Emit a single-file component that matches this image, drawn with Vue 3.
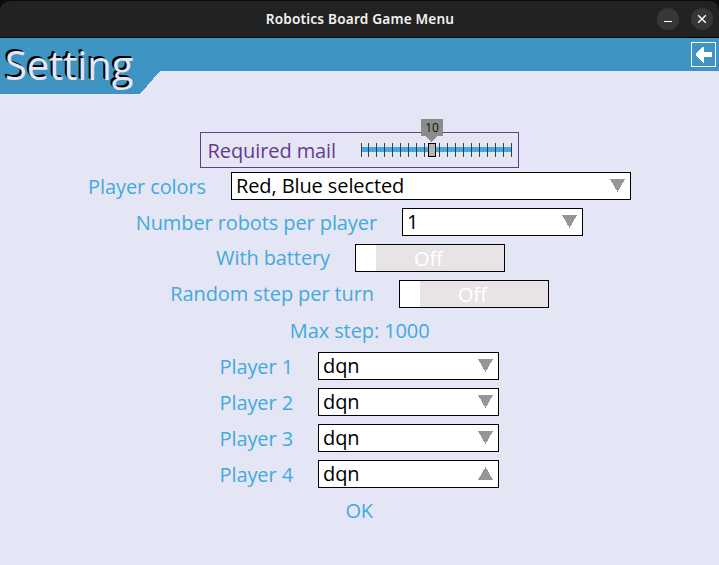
<script setup>
const rows = [
  { label: 'Player colors', labelWidth: 118, kind: 'select', value: 'Red, Blue selected', width: 400 },
  { label: 'Number robots per player', labelWidth: 241, kind: 'select', value: '1', width: 181 },
  { label: 'With battery', labelWidth: 116, kind: 'toggle', value: 'Off' },
  { label: 'Random step per turn', labelWidth: 204, kind: 'toggle', value: 'Off' },
  { label: 'Max step: 1000', labelWidth: 140, kind: 'text' },
  { label: 'Player 1', labelWidth: 73, kind: 'select', value: 'dqn', width: 181 },
  { label: 'Player 2', labelWidth: 73, kind: 'select', value: 'dqn', width: 181 },
  { label: 'Player 3', labelWidth: 73, kind: 'select', value: 'dqn', width: 181 },
  { label: 'Player 4', labelWidth: 73, kind: 'select', value: 'dqn', width: 181, up: true },
  { label: 'OK', labelWidth: 27, kind: 'text' },
]
const ticks = [0, 7, 15, 23, 31, 39, 47, 55, 63, 78, 86, 94, 102, 110, 118, 126, 134, 142, 150]
</script>

<template>
  <div class="window">
    <div class="backdrop">
      <div class="titlebar">
        <span class="caption">Robotics Board Game Menu</span>
        <div class="controls">
          <svg class="control" viewBox="0 0 22 22">
            <circle cx="11" cy="11" r="11" fill="#373737" />
            <path d="M7 13.5H15" stroke="#fff" shape-rendering="crispEdges" />
          </svg>
          <svg class="control" viewBox="0 0 22 22">
            <circle cx="11" cy="11" r="11" fill="#373737" />
            <path d="M7.2 7.2L14.8 14.8M14.8 7.2L7.2 14.8" stroke="#fff" stroke-width="1.4" />
          </svg>
        </div>
      </div>
    </div>
    <header class="header">
      <svg class="banner" viewBox="0 0 719 56" shape-rendering="crispEdges">
        <path d="M0 0H719V33H160L140 56H0Z" fill="#3e95c4" />
      </svg>
      <h1 class="heading">Setting</h1>
      <svg class="back" viewBox="0 0 25 25" shape-rendering="crispEdges">
        <rect x=".5" y=".5" width="24" height="24" fill="none" stroke="#fff" />
        <path d="M4.5 12.5L12 4.5H13V10H21V15H13V20.5H12Z" fill="#fff" />
      </svg>
    </header>
    <main class="menu">
      <div class="row selected">
        <span class="label" :style="{ width: '128px' }">Required mail</span>
        <div class="slider">
          <svg class="scale" viewBox="0 0 151 14" shape-rendering="crispEdges">
            <rect y="4" width="151" height="5" fill="#3eaadc" />
            <rect v-for="x in ticks" :key="x" :x="x" width="1" height="14" fill="#3c3c3c" />
            <rect x="67.5" y=".5" width="7" height="13" fill="#b4b4b4" stroke="#000" />
          </svg>
          <div class="bubble">10
            <svg class="pointer" viewBox="0 0 11 7" shape-rendering="crispEdges"><path d="M0 0H11L5.5 6.5Z" fill="#8c8c8c" /></svg>
          </div>
        </div>
      </div>
      <div v-for="row in rows" :key="row.label" class="row">
        <span class="label" :class="{ raised: row.kind === 'toggle' }" :style="{ width: row.labelWidth + 'px' }">{{ row.label }}</span>
        <div v-if="row.kind === 'select'" class="select" :style="{ width: row.width + 'px' }">
          <span class="value">{{ row.value }}</span>
          <svg class="arrow" viewBox="0 0 15 13" shape-rendering="crispEdges">
            <path :d="row.up ? 'M0 13H15L7.5 0Z' : 'M0 0H15L7.5 13Z'" fill="#969696" />
          </svg>
        </div>
        <div v-if="row.kind === 'toggle'" class="toggle">
          <span class="knob"></span>
          <span class="state">{{ row.value }}</span>
        </div>
      </div>
    </main>
  </div>
</template>

<style>
body { margin: 0; background: #e4e6f6; }
</style>

<style scoped>
.window { width: 719px; height: 565px; overflow: hidden; background: #e4e6f6; font-family: "Open Sans", "Noto Sans", sans-serif; }
.backdrop { height: 37px; border-bottom: 1px solid #000; background: #0b0b0b; }
.titlebar { position: relative; box-sizing: border-box; height: 37px; border-top: 1px solid #0b0b0b; border-radius: 10px 10px 0 0; background: #222; display: flex; align-items: center; justify-content: center; }
.caption { margin-top: -1px; margin-left: 1px; color: #f2f2f2; font-size: 13.6px; letter-spacing: 0.2px; font-weight: 600; font-family: "Noto Sans", sans-serif; white-space: nowrap; }
.controls { position: absolute; right: 6px; top: 7px; display: flex; gap: 12px; }
.control { width: 22px; height: 22px; display: block; }
.header { position: relative; height: 56px; display: flex; justify-content: space-between; }
.banner { position: absolute; inset: 0; width: 719px; height: 56px; }
.heading { position: relative; margin: 0 0 0 5px; font-size: 40px; letter-spacing: -0.15px; line-height: 54px; font-weight: 400; color: #e4e6f6; text-shadow: -1px -1px 0 #000, -2px -2px 0 #000; }
.back { position: relative; width: 25px; height: 25px; margin: 4px 3px 0 0; }
.menu { margin-top: 38px; display: flex; flex-direction: column; align-items: center; }
.row { box-sizing: border-box; height: 36px; display: flex; align-items: center; justify-content: center; gap: 25px; color: #42aadc; font-size: 20px; line-height: 28px; }
.label { display: flex; justify-content: flex-end; white-space: pre; padding-top: 1px; letter-spacing: -0.1px; }
.raised { padding: 0 0 1px; }
.selected { border: 1px solid #673a8b; color: #673a8b; padding: 0 6px 0 7px; }
.slider { position: relative; width: 151px; height: 14px; }
.scale { display: block; width: 151px; height: 14px; }
.bubble { position: absolute; left: 60px; top: -24px; width: 22px; height: 17px; background: #8c8c8c; color: #111; font-size: 12px; line-height: 17px; text-align: center; }
.pointer { position: absolute; left: 5px; top: 17px; width: 11px; height: 7px; }
.select { box-sizing: border-box; height: 28px; border: 1px solid #000; background: #fff; color: #000; display: flex; justify-content: space-between; padding: 0 5px 0 4px; }
.value { line-height: 26px; letter-spacing: -0.1px; }
.arrow { width: 15px; height: 13px; margin-top: 6px; }
.toggle { box-sizing: border-box; width: 150px; height: 28px; border: 1px solid #000; background: #e8e3e6; display: flex; }
.knob { width: 20px; background: #fff; }
.state { flex: 1; padding-right: 23px; text-align: center; color: #fff; line-height: 28px; }
</style>
